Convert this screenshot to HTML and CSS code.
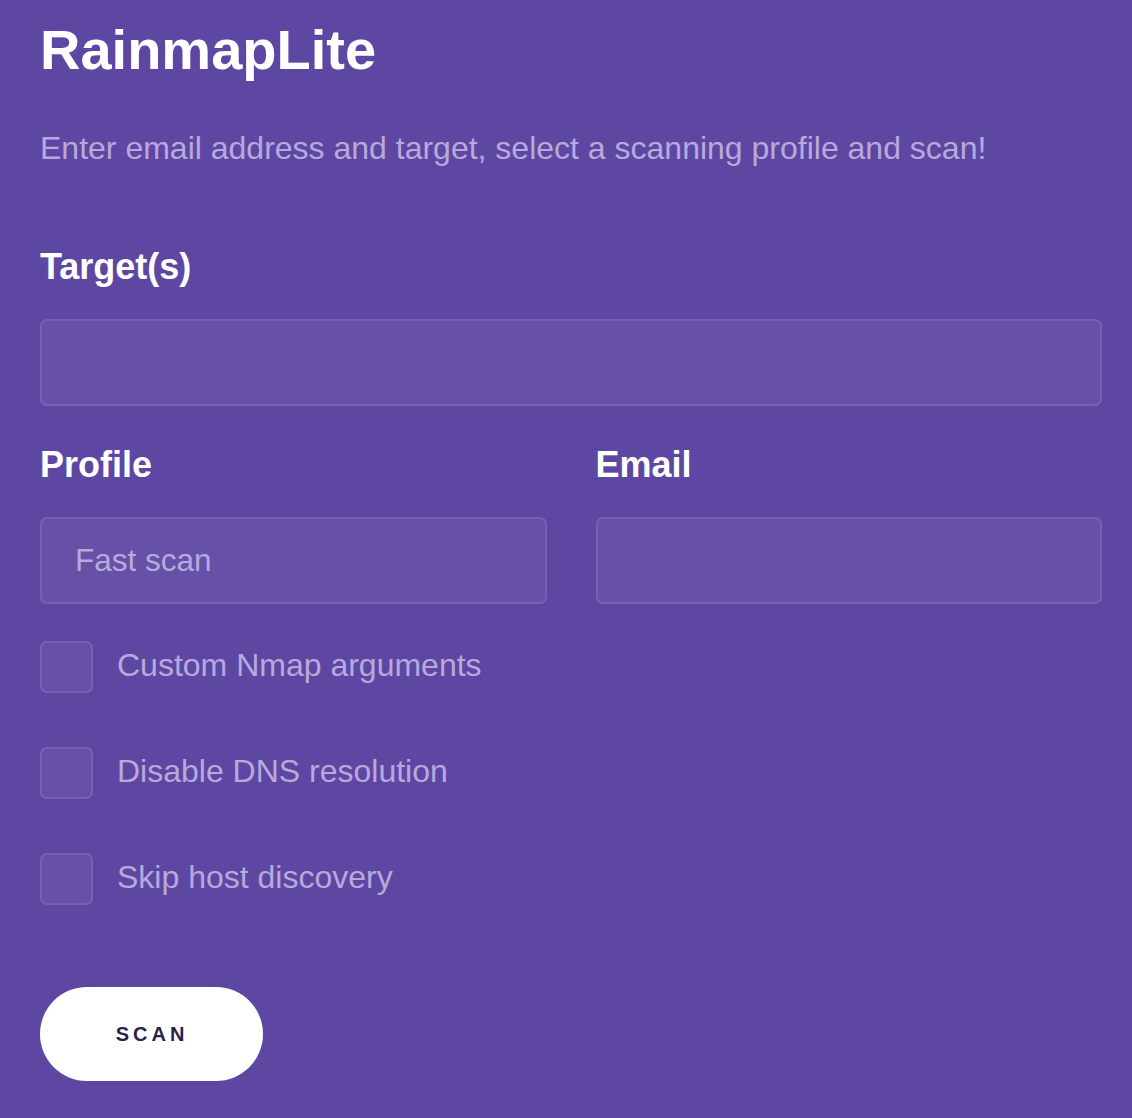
FILE: index.html
```html
<!DOCTYPE html>
<html lang="en">
<head>
<meta charset="utf-8">
<title>RainmapLite</title>
<link rel="stylesheet" href="styles.css">
</head>
<body>
<main class="page">
  <h1 class="title">RainmapLite</h1>
  <p class="intro">Enter email address and target, select a scanning profile and scan!</p>
  <form class="scan-form">
    <div class="field">
      <label class="label" for="targets">Target(s)</label>
      <input class="input" id="targets" type="text">
    </div>
    <div class="row">
      <div class="field">
        <label class="label" for="profile">Profile</label>
        <div class="input select" id="profile">Fast scan</div>
      </div>
      <div class="field">
        <label class="label" for="email">Email</label>
        <input class="input" id="email" type="text">
      </div>
    </div>
    <div class="checks">
      <label class="check"><span class="box"></span><span class="check-text">Custom Nmap arguments</span></label>
      <label class="check"><span class="box"></span><span class="check-text">Disable DNS resolution</span></label>
      <label class="check"><span class="box"></span><span class="check-text">Skip host discovery</span></label>
    </div>
    <button class="btn" type="button">SCAN</button>
  </form>
</main>
</body>
</html>
```
FILE: styles.css
```css
html, body {
  margin: 0;
  padding: 0;
  background: #5e47a3;
}
body {
  font-family: "Liberation Sans", Arial, Helvetica, sans-serif;
  color: #ffffff;
}
.page {
  padding: 18px 30px 0 40px;
}
.title {
  margin: 0;
  font-size: 56px;
  line-height: 64px;
  font-weight: 700;
  color: #ffffff;
}
.intro {
  margin: 46px 0 0;
  font-size: 32px;
  line-height: 40px;
  color: #b8a9dc;
}
.scan-form {
  display: flex;
  flex-direction: column;
  margin-top: 79px;
}
.field {
  display: flex;
  flex-direction: column;
  gap: 32px;
}
.label {
  font-size: 36px;
  line-height: 40px;
  font-weight: 700;
  color: #ffffff;
}
.input {
  box-sizing: border-box;
  height: 87px;
  width: 100%;
  margin: 0;
  padding: 0 33px;
  border: 2px solid #7562b4;
  border-radius: 7px;
  background: #6650a8;
  font-family: inherit;
  font-size: 31.5px;
  color: #b8a9dc;
  outline: none;
}
.select {
  display: flex;
  align-items: center;
}
.row {
  display: grid;
  grid-template-columns: 1fr 1fr;
  column-gap: 49px;
  margin-top: 39px;
}
.checks {
  display: flex;
  flex-direction: column;
  gap: 54px;
  margin-top: 37px;
}
.check {
  display: flex;
  align-items: center;
  gap: 24px;
  height: 52px;
}
.box {
  box-sizing: border-box;
  width: 53px;
  height: 52px;
  border: 2px solid #7562b4;
  border-radius: 7px;
  background: #6650a8;
  flex: none;
}
.check-text {
  font-size: 32px;
  line-height: 40px;
  margin-top: -4px;
  color: #b8a9dc;
}
.btn {
  align-self: flex-start;
  margin-top: 82px;
  width: 223px;
  height: 94px;
  border: none;
  border-radius: 47px;
  background: #ffffff;
  color: #2a1f4d;
  font-family: inherit;
  font-size: 20px;
  font-weight: 700;
  letter-spacing: 4px;
  text-indent: 1px;
  cursor: pointer;
}
```
